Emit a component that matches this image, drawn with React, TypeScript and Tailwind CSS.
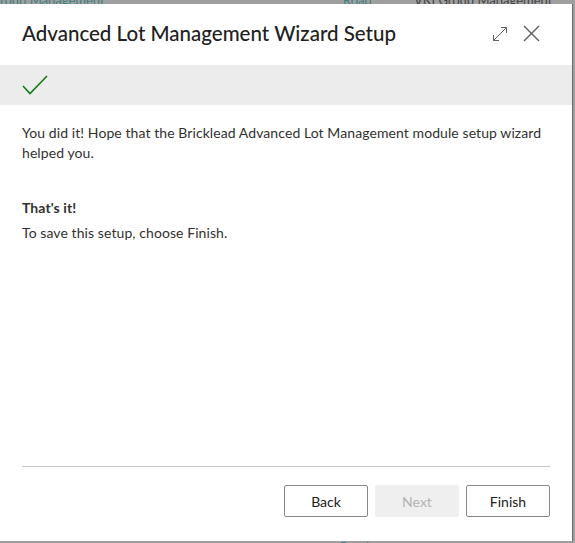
import React from 'react';

const font = { fontFamily: '"Segoe UI", Lato, "Noto Sans", sans-serif' };

function ExpandIcon() {
  return (
    <svg width="16" height="16" viewBox="0 0 16 16" fill="none" stroke="#616161" strokeWidth="1">
      <path d="M1.5 14.5 L14.5 1.5" />
      <path d="M9 1.5 H14.5 V7" />
      <path d="M1.5 9 V14.5 H7" />
    </svg>
  );
}

function CloseIcon() {
  return (
    <svg width="17" height="17" viewBox="0 0 17 17" fill="none" stroke="#616161" strokeWidth="1.4">
      <path d="M1 1 L16 16" />
      <path d="M16 1 L1 16" />
    </svg>
  );
}

function CheckIcon() {
  return (
    <svg width="26" height="20" viewBox="0 0 26 20" fill="none" stroke="#107c10" strokeWidth="1.6">
      <path d="M1 11 L8 18.5 L25 1" />
    </svg>
  );
}

export default function App() {
  return (
    <div className="relative w-[575px] h-[543px] overflow-hidden bg-[#9f9f9f]" style={font}>
      {/* page behind the dialog */}
      <div className="absolute left-0 top-[-9px] text-[13px] text-[#3f7f80] whitespace-nowrap">roup Management</div>
      <div className="absolute left-[343px] top-[-9px] text-[13px] text-[#3f7f80]">Road</div>
      <div className="absolute left-[414px] top-[-9px] text-[13px] text-[#444] whitespace-nowrap">VKI Group Management</div>
      <div className="absolute left-[340px] top-[538px] text-[13px] text-[#3f7f80]">Road</div>

      <div className="pt-[4px]">
        <div className="relative flex flex-col w-[573px] h-[537px] bg-white border-r border-[#6b6b6b]">
          <div className="flex items-center justify-between pl-[22px] pr-[32px] h-[61px] pb-[2px]">
            <h1 className="text-[20.5px] text-[#212121] font-medium">Advanced Lot Management Wizard Setup</h1>
            <div className="flex items-center gap-[15px]">
              <ExpandIcon />
              <CloseIcon />
            </div>
          </div>

          <div className="flex items-center h-[40px] bg-[#ececec] pl-[22px]">
            <CheckIcon />
          </div>

          <div className="flex-1 px-[22px] pt-[18px] text-[14px] leading-[20px] text-[#323130] tracking-[0.08px]">
            <p>You did it! Hope that the Bricklead Advanced Lot Management module setup wizard helped you.</p>
            <p className="mt-[35px] font-bold">That's it!</p>
            <p className="mt-[5px]">To save this setup, choose Finish.</p>
          </div>

          <div className="mx-[22px] border-t border-[#c8c6c4]" />
          <div className="flex justify-end gap-[7px] px-[22px] pt-[18px] pb-[24px]">
            <button className="w-[84px] h-[32px] border border-[#8a8886] rounded-[2px] text-[14px] text-[#212121] bg-white">Back</button>
            <button className="w-[84px] h-[32px] rounded-[2px] text-[14px] text-[#b3b3b3] bg-[#efefef]">Next</button>
            <button className="w-[84px] h-[32px] border border-[#8a8886] rounded-[2px] text-[14px] text-[#212121] bg-white">Finish</button>
          </div>
        </div>
      </div>
    </div>
  );
}
